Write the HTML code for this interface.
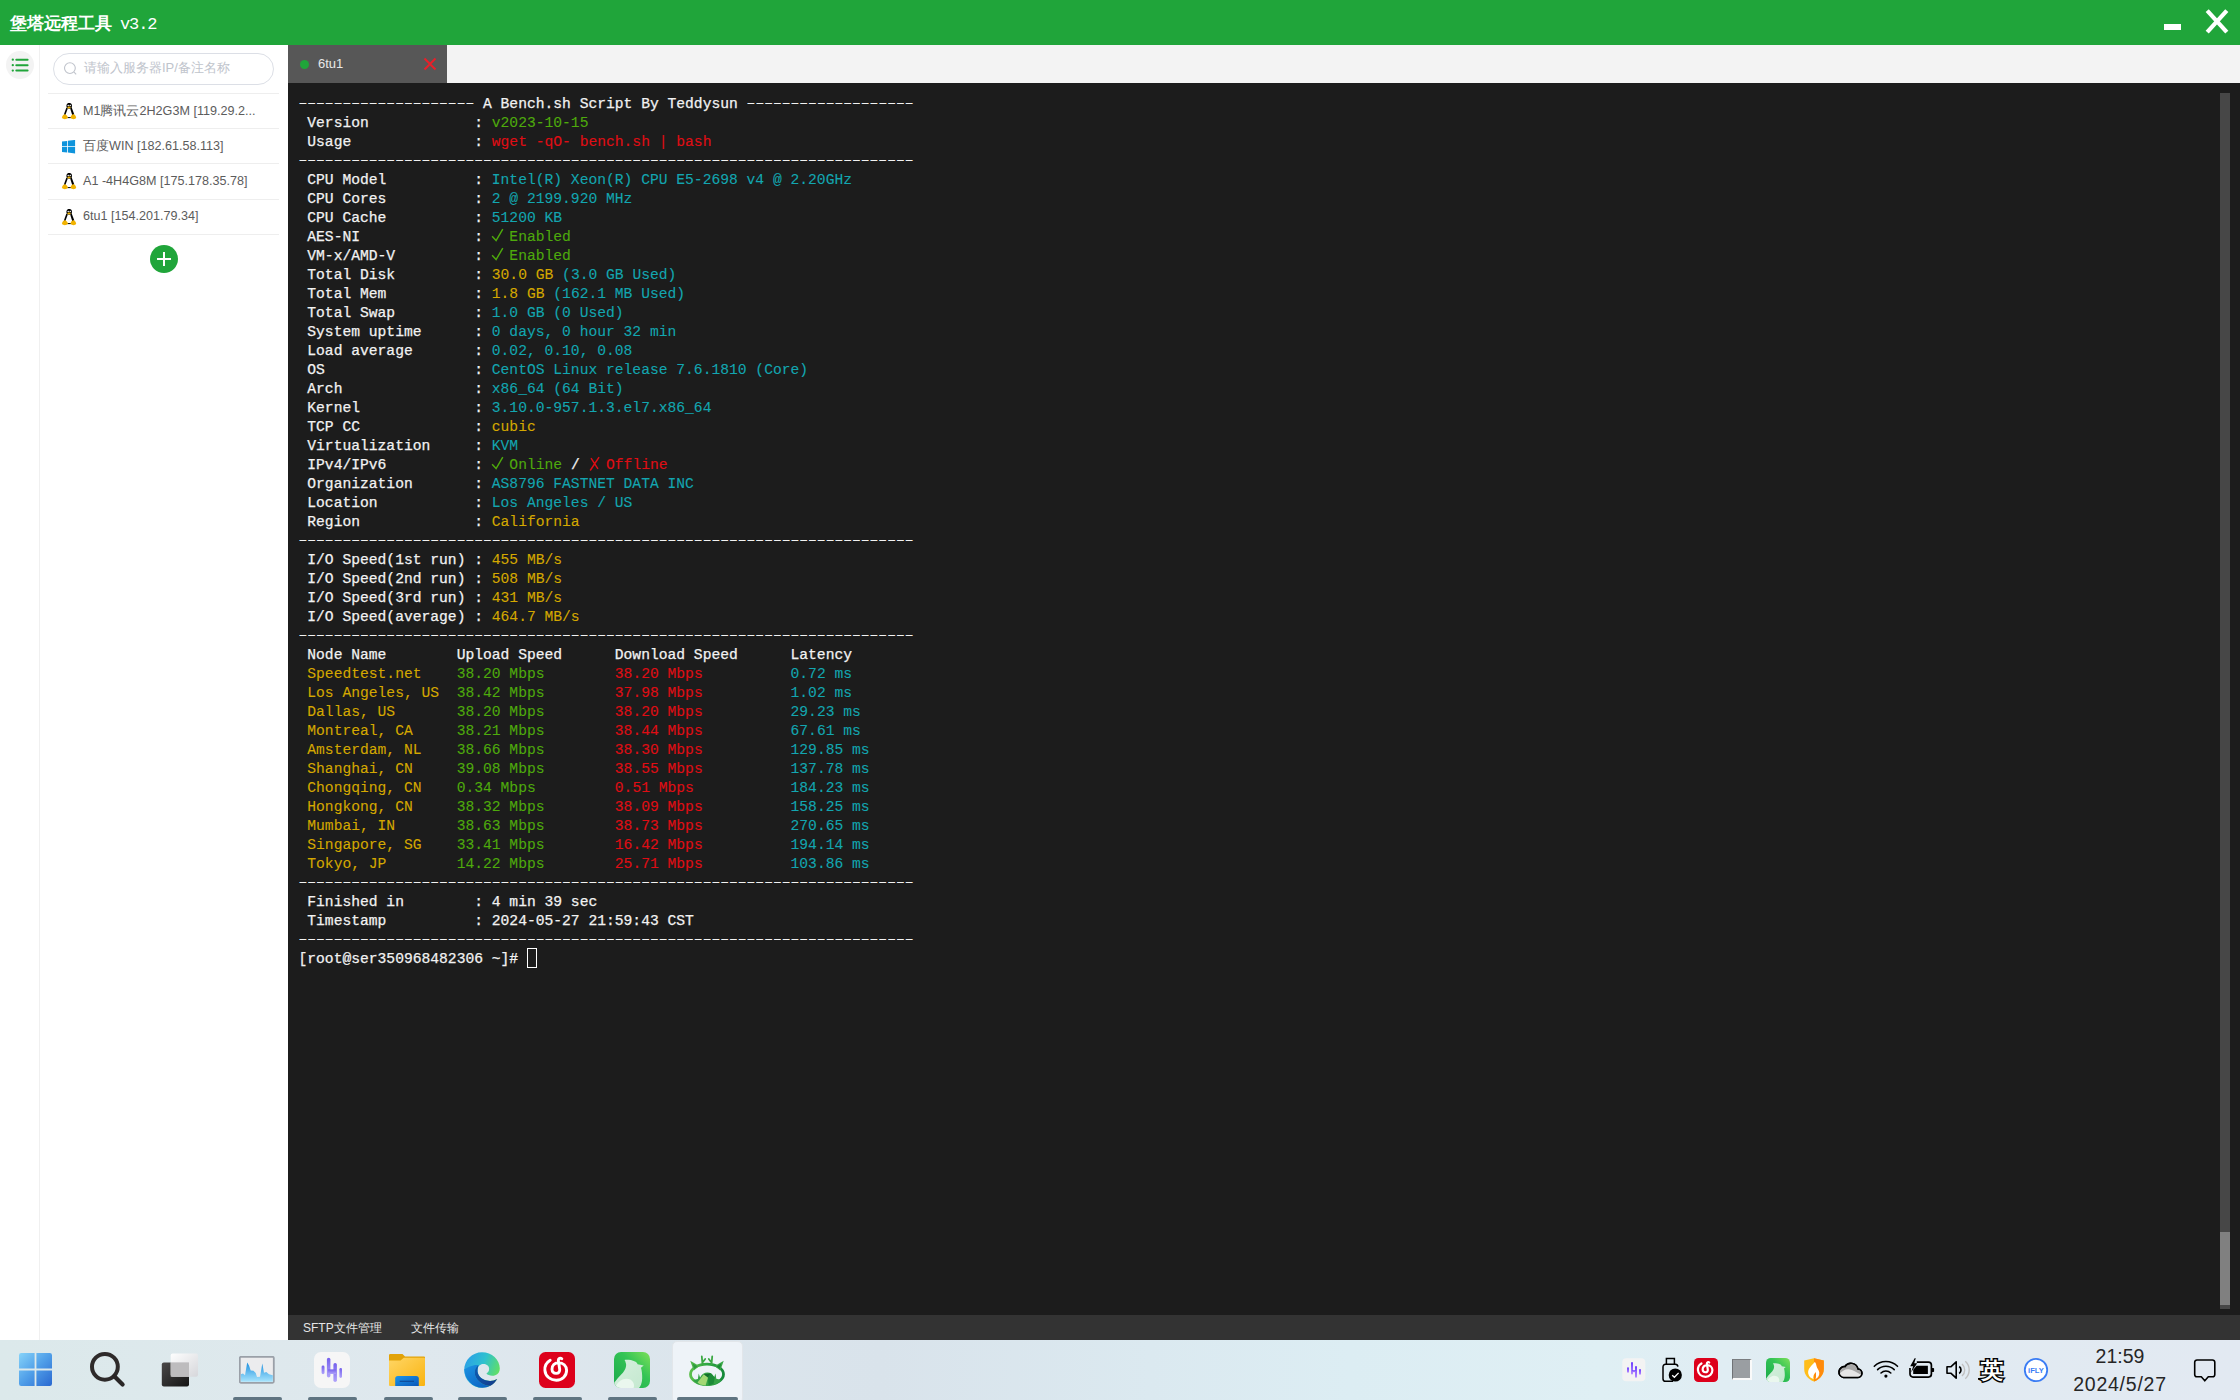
<!DOCTYPE html>
<html><head><meta charset="utf-8">
<style>
*{box-sizing:border-box}
html,body{margin:0;padding:0;width:2240px;height:1400px;overflow:hidden;background:#fff;font-family:"Liberation Sans",sans-serif}
.abs{position:absolute}
#title{left:0;top:0;width:2240px;height:45px;background:#20a53a}
#title .t{left:10px;top:13px;color:#fff;font-family:"Liberation Serif",serif;font-weight:bold;font-size:17px;line-height:22px;white-space:nowrap}
#side0{left:0;top:45px;width:40px;height:1295px;background:#fff;border-right:1px solid #f0f0f0}
#side{left:40px;top:45px;width:248px;height:1295px;background:#fff}
#tabbar{left:288px;top:45px;width:1952px;height:38px;background:#f3f3f3}
#tab{left:288px;top:45px;width:159px;height:38px;background:#575757}
#term{left:288px;top:83px;width:1952px;height:1232px;background:#1c1c1c}
#status{left:288px;top:1315px;width:1952px;height:25px;background:#333333}
#taskbar{left:0;top:1340px;width:2240px;height:60px;background:linear-gradient(90deg,#dce9eb 0px,#dfe8ee 420px,#d9e3eb 880px,#dbe9f0 1150px,#dcedf3 1350px,#dfeff4 1600px,#e1ebf2 1850px,#e2e9f2 2240px)}
pre{margin:0}
#txt{left:298.5px;top:95px;font-family:"Liberation Mono",monospace;font-size:14.65px;line-height:19px;color:#f2f2f2;white-space:pre;-webkit-text-stroke:0.25px currentColor}
.g{color:#4eaa0c}.r{color:#e00d14}.y{color:#d4a800}.c{color:#13a6b0}
.ck{vertical-align:top;overflow:visible}
.dl{position:relative;top:-1px}
.g,.r,.y,.c{-webkit-text-stroke:0.1px currentColor}
.ind{top:1397px;width:49px;height:4px;border-radius:2px;background:#5f7481}
.sitem{left:48px;width:231px;height:1px;background:#eeeeee}
.stext{left:83px;font-size:12.6px;color:#5c5c5c;white-space:nowrap;line-height:14px}
</style></head><body>
<div id="title" class="abs"><div class="t abs">堡塔远程工具</div><div class="abs" style="left:120px;top:14px;font-family:'Liberation Mono',monospace;font-size:17px;line-height:22px;letter-spacing:-1.1px;color:#fff">v3.2</div>
 <div class="abs" style="left:2164px;top:24px;width:17px;height:6px;background:#fff"></div>
 <svg class="abs" style="left:2203px;top:7px" width="28" height="30" viewBox="0 0 28 30"><path d="M4.2 3.6L23.8 25.2M23.8 3.6L4.2 25.2" stroke="#fff" stroke-width="4.2" fill="none"/></svg>
</div>
<div id="side0" class="abs"></div>
<div class="abs" style="left:6px;top:51px;width:28px;height:28px;border-radius:50%;background:#f3f3f3"></div>
<svg class="abs" style="left:0;top:45px" width="40" height="40" viewBox="0 0 40 40">
<g fill="#20a53a"><circle cx="12.8" cy="14.7" r="1.15"/><circle cx="12.8" cy="20.2" r="1.15"/><circle cx="12.8" cy="25.6" r="1.15"/></g>
<g stroke="#20a53a" stroke-width="2" stroke-linecap="round"><path d="M16.3 14.7H27.6M16.3 20.2H27.6M16.3 25.6H27.6"/></g></svg>
<div id="side" class="abs"></div>
<div class="abs" style="left:53px;top:53px;width:221px;height:32px;border:1px solid #dcdfe6;border-radius:16px;background:#fff"></div>
<svg class="abs" style="left:60px;top:58px" width="22" height="22" viewBox="0 0 22 22"><circle cx="9.9" cy="10.1" r="5.4" stroke="#c0c4cc" stroke-width="1.1" fill="none"/><path d="M14 14.2L16.2 16.4" stroke="#c0c4cc" stroke-width="1.1"/></svg>
<div class="abs" style="left:84px;top:60px;font-size:13px;line-height:16px;color:#c0c4cc;white-space:nowrap">请输入服务器IP/备注名称</div>
<div class="abs sitem" style="top:93px"></div>
<div class="abs sitem" style="top:128px"></div>
<div class="abs sitem" style="top:163px"></div>
<div class="abs sitem" style="top:199px"></div>
<div class="abs sitem" style="top:234px"></div>
<div class="abs stext" style="top:104px">M1腾讯云2H2G3M [119.29.2...</div>
<div class="abs stext" style="top:139px">百度WIN [182.61.58.113]</div>
<div class="abs stext" style="top:174px">A1 -4H4G8M [175.178.35.78]</div>
<div class="abs stext" style="top:209px">6tu1 [154.201.79.34]</div>
<svg class="abs" style="left:60px;top:103px" width="18" height="18" viewBox="0 0 18 18">
<path d="M6.4 4.6L3.8 11.8L5.3 12.3L7.8 5.6Z" fill="#000"/>
<path d="M11.6 4.2L14.3 11.6L12.3 12.4L10.2 5.6Z" fill="#000"/>
<ellipse cx="9.2" cy="2.8" rx="2.8" ry="2.9" fill="#000"/>
<circle cx="8.2" cy="2.4" r="0.75" fill="#fff"/><circle cx="10.2" cy="2.4" r="0.75" fill="#fff"/>
<ellipse cx="9" cy="4.5" rx="1.7" ry="0.9" fill="#f0b400"/>
<path d="M6.5 14.6H11.8" stroke="#000" stroke-width="1"/>
<path d="M1.9 14.3Q2.4 11.5 5 10.9Q7.7 12.3 8.1 14.8Q6.6 16.4 4 16.1Q2.1 15.7 1.9 14.3Z" fill="#f2b300"/>
<path d="M16.2 14.3Q15.7 11.5 13.1 10.9Q10.4 12.3 10.4 14.8Q11.9 16.4 14.4 16.1Q16.1 15.7 16.2 14.3Z" fill="#f2b300"/>
</svg>
<svg class="abs" style="left:62px;top:140px" width="14" height="14" viewBox="0 0 14 14"><path d="M0 1.6L5.1 0.9V6.3H0Z M5.9 0.8L13.1 -0.1V6.3H5.9Z M0 7.1H5.1V12.6L0 11.9Z M5.9 7.1H13.1V13.5L5.9 12.6Z" fill="#0f94dc"/></svg>
<svg class="abs" style="left:60px;top:173px" width="18" height="18" viewBox="0 0 18 18">
<path d="M6.4 4.6L3.8 11.8L5.3 12.3L7.8 5.6Z" fill="#000"/>
<path d="M11.6 4.2L14.3 11.6L12.3 12.4L10.2 5.6Z" fill="#000"/>
<ellipse cx="9.2" cy="2.8" rx="2.8" ry="2.9" fill="#000"/>
<circle cx="8.2" cy="2.4" r="0.75" fill="#fff"/><circle cx="10.2" cy="2.4" r="0.75" fill="#fff"/>
<ellipse cx="9" cy="4.5" rx="1.7" ry="0.9" fill="#f0b400"/>
<path d="M6.5 14.6H11.8" stroke="#000" stroke-width="1"/>
<path d="M1.9 14.3Q2.4 11.5 5 10.9Q7.7 12.3 8.1 14.8Q6.6 16.4 4 16.1Q2.1 15.7 1.9 14.3Z" fill="#f2b300"/>
<path d="M16.2 14.3Q15.7 11.5 13.1 10.9Q10.4 12.3 10.4 14.8Q11.9 16.4 14.4 16.1Q16.1 15.7 16.2 14.3Z" fill="#f2b300"/>
</svg>
<svg class="abs" style="left:60px;top:208.5px" width="18" height="18" viewBox="0 0 18 18">
<path d="M6.4 4.6L3.8 11.8L5.3 12.3L7.8 5.6Z" fill="#000"/>
<path d="M11.6 4.2L14.3 11.6L12.3 12.4L10.2 5.6Z" fill="#000"/>
<ellipse cx="9.2" cy="2.8" rx="2.8" ry="2.9" fill="#000"/>
<circle cx="8.2" cy="2.4" r="0.75" fill="#fff"/><circle cx="10.2" cy="2.4" r="0.75" fill="#fff"/>
<ellipse cx="9" cy="4.5" rx="1.7" ry="0.9" fill="#f0b400"/>
<path d="M6.5 14.6H11.8" stroke="#000" stroke-width="1"/>
<path d="M1.9 14.3Q2.4 11.5 5 10.9Q7.7 12.3 8.1 14.8Q6.6 16.4 4 16.1Q2.1 15.7 1.9 14.3Z" fill="#f2b300"/>
<path d="M16.2 14.3Q15.7 11.5 13.1 10.9Q10.4 12.3 10.4 14.8Q11.9 16.4 14.4 16.1Q16.1 15.7 16.2 14.3Z" fill="#f2b300"/>
</svg>
<div class="abs" style="left:150px;top:245px;width:28px;height:28px;border-radius:50%;background:#20a53a"></div>
<div class="abs" style="left:157px;top:258px;width:14px;height:2px;background:#fff"></div>
<div class="abs" style="left:163px;top:252px;width:2px;height:14px;background:#fff"></div>
<div id="tabbar" class="abs"></div>
<div id="tab" class="abs"></div>
<div class="abs" style="left:300px;top:60px;width:9px;height:9px;border-radius:50%;background:#20a53a"></div>
<div class="abs" style="left:318px;top:56px;font-size:13px;line-height:15px;color:#e8e8e8">6tu1</div>
<svg class="abs" style="left:422px;top:56px" width="16" height="16" viewBox="0 0 16 16"><path d="M2.5 2.5L13.5 13.5M13.5 2.5L2.5 13.5" stroke="#e8202a" stroke-width="2"/></svg>
<div id="term" class="abs"></div>
<div id="status" class="abs"></div>
<div class="abs" style="left:303px;top:1321px;font-size:12px;line-height:15px;color:#e6e6e6;white-space:nowrap">SFTP文件管理</div>
<div class="abs" style="left:411px;top:1321px;font-size:12px;line-height:15px;color:#e6e6e6;white-space:nowrap">文件传输</div>
<div class="abs" style="left:2220px;top:93px;width:10px;height:1216px;background:#474747"></div>
<div class="abs" style="left:2220px;top:1232px;width:10px;height:73px;background:#808080"></div>
<div id="taskbar" class="abs"></div>

<!-- start -->
<svg class="abs" style="left:19px;top:1353px" width="33" height="33" viewBox="0 0 33 33">
<defs><linearGradient id="wg" x1="0" y1="0" x2="1" y2="1"><stop offset="0" stop-color="#86d3f9"/><stop offset="0.5" stop-color="#4f9ee8"/><stop offset="1" stop-color="#2a68d0"/></linearGradient></defs>
<path d="M2.2 0H15.6V15.6H0V2.2A2.2 2.2 0 0 1 2.2 0Z M17.4 0H30.8A2.2 2.2 0 0 1 33 2.2V15.6H17.4Z M0 17.4H15.6V33H2.2A2.2 2.2 0 0 1 0 30.8Z M17.4 17.4H33V30.8A2.2 2.2 0 0 1 30.8 33H17.4Z" fill="url(#wg)"/></svg>
<!-- search -->
<svg class="abs" style="left:88px;top:1350px" width="40" height="40" viewBox="0 0 40 40">
<circle cx="16.9" cy="16.8" r="12.9" stroke="#2e2a2a" stroke-width="4" fill="none"/>
<path d="M26.3 26.3L34.6 34.6" stroke="#2a2626" stroke-width="4.2" stroke-linecap="round"/></svg>
<!-- taskview -->
<svg class="abs" style="left:160px;top:1351px" width="40" height="38" viewBox="0 0 40 38">
<defs><linearGradient id="tv1" x1="0" y1="0" x2="1" y2="1"><stop offset="0" stop-color="#4a4848"/><stop offset="1" stop-color="#141414"/></linearGradient>
<linearGradient id="tv2" x1="0" y1="0" x2="1" y2="1"><stop offset="0" stop-color="#ffffff"/><stop offset="1" stop-color="#d6d6da"/></linearGradient></defs>
<rect x="1.8" y="11.4" width="27.2" height="24.1" rx="2" fill="url(#tv1)"/>
<rect x="10.7" y="2.5" width="27.3" height="23.2" rx="2" fill="url(#tv2)" opacity="0.95"/>
<rect x="10.7" y="11.4" width="18.3" height="14.3" fill="#bdbcbe"/></svg>
<!-- taskmgr -->
<svg class="abs" style="left:239px;top:1356px" width="36" height="28" viewBox="0 0 36 28">
<defs><linearGradient id="tmg" x1="0" y1="0" x2="0" y2="1"><stop offset="0" stop-color="#1e90e0"/><stop offset="1" stop-color="#a8e4fc"/></linearGradient></defs>
<rect x="0.8" y="0.8" width="34" height="26" rx="1.2" fill="#ececee" stroke="#9aa0a8" stroke-width="1.8"/>
<path d="M1.8 18.2L4 17.5L6 19.2L8.2 6.5L10 9.5L11.7 14.5L14.5 14.8L16.7 17L18 21L21 20.8L23.3 7.5L25 16.8L27.3 16.1L30 18.2L33.8 19.2V25.8H1.8Z" fill="url(#tmg)"/></svg>
<!-- audio app -->
<svg class="abs" style="left:314px;top:1352px" width="36" height="36" viewBox="0 0 36 36">
<defs><linearGradient id="aug" x1="0" y1="0" x2="0" y2="1"><stop offset="0" stop-color="#7560ec"/><stop offset="1" stop-color="#b0a4fa"/></linearGradient></defs>
<rect x="0" y="0" width="36" height="36" rx="7" fill="#f6f6f6"/>
<g fill="url(#aug)"><rect x="7.6" y="13.6" width="2.9" height="8.6" rx="1.45"/><rect x="12.9" y="5.8" width="3.5" height="19.8" rx="1.75"/><rect x="19.4" y="11" width="3.5" height="19" rx="1.75"/><rect x="25.4" y="16" width="2.6" height="9.9" rx="1.3"/><rect x="14" y="17.4" width="8" height="4.6"/></g></svg>
<!-- folder -->
<svg class="abs" style="left:389px;top:1353px" width="37" height="34" viewBox="0 0 37 34">
<defs><linearGradient id="fg" x1="0" y1="0" x2="1" y2="1"><stop offset="0" stop-color="#ffd665"/><stop offset="1" stop-color="#f9b310"/></linearGradient>
<linearGradient id="fbg" x1="0" y1="0" x2="1" y2="1"><stop offset="0" stop-color="#1b96ea"/><stop offset="1" stop-color="#0a56b8"/></linearGradient></defs>
<path d="M1.2 1H13.5L16 3.4H35A1.1 1.1 0 0 1 36 4.5V10H0V2.2A1.2 1.2 0 0 1 1.2 1Z" fill="#e2a208"/>
<path d="M0 7.6H11.5L14.8 4.7H35A1.1 1.1 0 0 1 36 5.8V32A1.1 1.1 0 0 1 35 33H1A1 1 0 0 1 0 32Z" fill="url(#fg)"/>
<path d="M6.2 33V25.5A2.6 2.6 0 0 1 8.8 22.9H27.2A2.6 2.6 0 0 1 29.8 25.5V33Z" fill="url(#fbg)"/>
<rect x="10.7" y="27.7" width="14.3" height="1.2" fill="#0e4a98"/></svg>
<!-- edge -->
<svg class="abs" style="left:464px;top:1352px" width="36" height="36" viewBox="0 0 36 36">
<defs><linearGradient id="eg1" x1="0" y1="0.2" x2="1" y2="0.6"><stop offset="0" stop-color="#2a9ee8"/><stop offset="0.5" stop-color="#2fc1cf"/><stop offset="1" stop-color="#66e25a"/></linearGradient>
<linearGradient id="eg2" x1="0" y1="0" x2="0.8" y2="1"><stop offset="0" stop-color="#1c93e2"/><stop offset="1" stop-color="#0b63c4"/></linearGradient>
<linearGradient id="eg3" x1="0" y1="0" x2="1" y2="0.5"><stop offset="0" stop-color="#0d5cb4"/><stop offset="1" stop-color="#123f8e"/></linearGradient></defs>
<path d="M18 0.2C8.2 0.2 0.2 8.2 0.2 18C0.2 27.8 8.2 35.8 18 35.8C24.5 35.8 30.2 32.3 33.2 27.1C30 28.8 26.4 29.4 23 28.6C16.8 27.2 13 22.6 13.6 17.4C14.2 12.9 18.2 11.3 21.5 12.3C24.2 13.2 25.8 15.4 24.9 18.6C24.5 20 23.3 21.1 22.4 21.6C24 23.6 28 24.4 31.2 23.3C34.3 22.3 35.8 19.8 35.8 16.5C35.8 7.4 27.9 0.2 18 0.2Z" fill="url(#eg1)"/>
<path d="M0.3 17.2C0.8 27.3 8.6 35.8 18.5 35.8C21.5 35.8 24.2 35.1 26.5 33.8C20.5 33.6 14.6 30.6 11.9 25.2C9.7 20.8 10.8 15.6 14.6 13C11.7 12.6 8.6 13.2 5.9 14.6C3.6 15.7 1.6 16.9 0.3 17.2Z" fill="url(#eg2)"/>
<path d="M14.6 13C10.8 15.6 9.7 20.8 11.9 25.2C14.6 30.6 20.5 33.6 26.5 33.8C29.2 32.4 31.5 30 33.2 27.1C30 28.8 26.4 29.4 23 28.6C16.8 27.2 13 22.6 13.6 17.4C13.8 15.7 14.1 14.2 14.6 13Z" fill="url(#eg3)"/>
</svg>
<!-- netease -->
<svg class="abs" style="left:539px;top:1352px" width="36" height="36" viewBox="0 0 36 36">
<rect width="36" height="36" rx="6.5" fill="#dd001b"/>
<path d="M11.2 8.2C7.4 10.4 5.6 14.2 5.9 18.3C6.4 24.3 11.4 28.2 17.3 28.2C23.5 28.2 27.7 23.4 27.6 18.2C27.5 13.9 24 10.6 19.8 10.6C15.6 10.6 12.9 13.7 13 17.2C13.1 19.6 14.8 21.3 17.2 21.4C19.6 21.4 21 19.6 20.7 17.3L19.3 8.3C19.4 6.6 21.3 5.4 22.8 6.8" stroke="#fff" stroke-width="2.9" fill="none" stroke-linecap="round"/></svg>
<!-- bird -->
<svg class="abs" style="left:614px;top:1352px" width="36" height="36" viewBox="0 0 36 36">
<defs><linearGradient id="bg1" x1="0" y1="1" x2="1" y2="0"><stop offset="0" stop-color="#1aa84a"/><stop offset="0.6" stop-color="#34c455"/><stop offset="1" stop-color="#7ee05a"/></linearGradient>
<linearGradient id="bg2" x1="0" y1="0" x2="1" y2="1"><stop offset="0" stop-color="#d6f0de"/><stop offset="1" stop-color="#c4e8cf"/></linearGradient></defs>
<clipPath id="bclip"><rect width="36" height="36" rx="7"/></clipPath>
<g clip-path="url(#bclip)"><rect width="36" height="36" fill="url(#bg1)"/>
<path d="M10.5 7.9C14 7.7 18 8 21 9.5C22.5 10.3 23.3 11.2 23.6 12.2L29.7 13.6L27 15.7C27.8 18.5 28.3 22 28.2 26.5C28 31 26.5 34.5 25 36H0V31C2.3 28 4.7 25 7.4 22.3C11.2 18.8 12.6 14.3 12 11.8C11.8 10.5 11.2 8.9 10.5 7.9Z" fill="url(#bg2)"/>
<path d="M1 36C2.5 32 5 29 9 27.3C13 25.8 18 26.8 19.5 31C20.4 33.5 20 35.5 19.5 36Z" fill="#eaf7ee"/></g></svg>
<!-- baota active -->
<div class="abs" style="left:672px;top:1341px;width:71px;height:62px;border-radius:5px;background:#eef3f8;border:1px solid #e2e6ea"></div>
<svg class="abs" style="left:687px;top:1353px" width="40" height="36" viewBox="0 0 40 36">
<defs><linearGradient id="btg" x1="0" y1="0" x2="1" y2="0"><stop offset="0" stop-color="#5cbf4c"/><stop offset="0.5" stop-color="#2fa843"/><stop offset="1" stop-color="#15893a"/></linearGradient></defs>
<ellipse cx="20" cy="21.3" rx="16.5" ry="10.2" stroke="url(#btg)" stroke-width="2.8" fill="none"/>
<path d="M6 27.2C7.8 26.6 9.5 26.3 10.9 26L11.7 20.6L13.1 24.6C14.8 21.2 17.4 19.6 20.4 19.6C23.4 19.6 25.6 20.9 27.1 24.2L28.5 20.4L29.3 25.8C30.7 26.1 32.2 26.6 34 27.2C31.5 30.6 26.3 32.6 20 32.6C13.7 32.6 8.5 30.6 6 27.2Z" fill="#34a345"/>
<path d="M10.5 29.5L16.8 21.2L21 24.6L18.6 32.4L13 31.5Z" fill="#a2d874"/>
<path d="M21 24.6L23.8 20.2L27.8 24.5L26.5 31L21.6 32.4Z" fill="#1b8a37"/>
<path d="M16.8 21.2L23.8 20.2L21 24.6Z" fill="#146f2c"/>
<path d="M6.8 17.5L3.2 7.7L12.3 13.1Z" fill="#4db548"/><path d="M7.2 16L5.8 10.5L10.5 13.5Z" fill="#2d9a3f"/>
<path d="M33.2 17.5L36.8 7.7L27.7 13.1Z" fill="#3aa847"/><path d="M32.8 16L34.2 10.5L29.5 13.5Z" fill="#1b8a37"/>
<path d="M15.5 11.5L14.8 3.5M15.7 9.2L18.2 6M24.5 11.5L25.2 3.5M24.3 9.2L21.8 6" stroke="#3aa843" stroke-width="1.8" stroke-linecap="round"/></svg>
<!-- indicators -->
<div class="abs ind" style="left:233px"></div><div class="abs ind" style="left:308px"></div><div class="abs ind" style="left:384px"></div><div class="abs ind" style="left:458px"></div><div class="abs ind" style="left:533px"></div><div class="abs ind" style="left:608px"></div><div class="abs ind" style="left:677px;width:61px"></div>
<!-- tray -->
<svg class="abs" style="left:1622px;top:1358px" width="24" height="24" viewBox="0 0 24 24">
<defs><linearGradient id="aug2" x1="0" y1="0" x2="0" y2="1"><stop offset="0" stop-color="#6a3cff"/><stop offset="1" stop-color="#b68cff"/></linearGradient></defs>
<rect x="0.3" y="0.3" width="23" height="23" rx="4" fill="#f3f3f3"/>
<g fill="url(#aug2)"><rect x="5" y="9.3" width="2" height="5.5" rx="1"/><rect x="9" y="4" width="2" height="12.5" rx="1"/><rect x="13" y="8" width="2" height="11.8" rx="1"/><rect x="17" y="11" width="2" height="5.8" rx="1"/><rect x="10" y="12.2" width="4" height="2"/></g></svg>
<svg class="abs" style="left:1661px;top:1357px" width="24" height="26" viewBox="0 0 24 26">
<path d="M5.4 7.3V1.6H13.4V7.3" stroke="#000" stroke-width="1.5" fill="none"/>
<path d="M12 24.3H4.6A2.6 2.6 0 0 1 2 21.7V10A2.6 2.6 0 0 1 4.6 7.3H14.3A2.6 2.6 0 0 1 16.9 9.6" stroke="#000" stroke-width="1.5" fill="none"/>
<circle cx="14.3" cy="18" r="6.6" fill="#000"/>
<path d="M11.2 18.2L13.4 20.3L17.6 15.9" stroke="#fff" stroke-width="1.3" fill="none"/></svg>
<svg class="abs" style="left:1694px;top:1358px" width="24" height="24" viewBox="0 0 36 36">
<rect width="36" height="36" rx="6.5" fill="#dd001b"/>
<path d="M11.2 8.2C7.4 10.4 5.6 14.2 5.9 18.3C6.4 24.3 11.4 28.2 17.3 28.2C23.5 28.2 27.7 23.4 27.6 18.2C27.5 13.9 24 10.6 19.8 10.6C15.6 10.6 12.9 13.7 13 17.2C13.1 19.6 14.8 21.3 17.2 21.4C19.6 21.4 21 19.6 20.7 17.3L19.3 8.3C19.4 6.6 21.3 5.4 22.8 6.8" stroke="#fff" stroke-width="3.3" fill="none" stroke-linecap="round"/></svg>
<div class="abs" style="left:1732px;top:1359px;width:20px;height:21px;background:#9a9ea2;border-left:1px solid #6f7276;border-top:1px solid #7a7d80;border-right:2px solid #fafafa;border-bottom:2px solid #fafafa"></div>
<svg class="abs" style="left:1766px;top:1358px" width="24" height="24" viewBox="0 0 36 36">
<clipPath id="bclip2"><rect width="36" height="36" rx="7"/></clipPath>
<g clip-path="url(#bclip2)"><rect width="36" height="36" fill="url(#bg1)"/>
<path d="M10.5 7.9C14 7.7 18 8 21 9.5C22.5 10.3 23.3 11.2 23.6 12.2L29.7 13.6L27 15.7C27.8 18.5 28.3 22 28.2 26.5C28 31 26.5 34.5 25 36H0V31C2.3 28 4.7 25 7.4 22.3C11.2 18.8 12.6 14.3 12 11.8C11.8 10.5 11.2 8.9 10.5 7.9Z" fill="url(#bg2)"/>
<path d="M1 36C2.5 32 5 29 9 27.3C13 25.8 18 26.8 19.5 31C20.4 33.5 20 35.5 19.5 36Z" fill="#eaf7ee"/></g></svg>
<svg class="abs" style="left:1803px;top:1358px" width="22" height="24" viewBox="0 0 22 24">
<path d="M11 0.3L20.8 2.5V11C20.8 17 16.5 21.5 11 23.5C5.5 21.5 1.2 17 1.2 11V2.5Z" fill="#ffbd1a"/>
<path d="M11 0.3L20.8 2.5V11C20.8 17 16.5 21.5 11 23.5Z" fill="#ff8a0c"/>
<path d="M11.8 4C9 7.5 4.5 10.5 5.2 15.5C5.7 18.5 8 20.5 10.5 21C9.5 18.5 11 16 13 14C12.8 16.5 13.5 18.5 12.5 21C15 20 16.5 17.5 16.3 14.5C16 11.8 14 10.5 13.5 8C13.3 6.5 12.8 5 11.8 4Z" fill="#fff"/></svg>
<svg class="abs" style="left:1837px;top:1361px" width="26" height="18" viewBox="0 0 26 18">
<path d="M6.5 16.5H20.3A4.3 4.3 0 0 0 21 7.9A7.2 7.2 0 0 0 7.9 5.6A5.5 5.5 0 0 0 6.5 16.5Z" fill="#a8a8a8" stroke="#000" stroke-width="1.5"/>
<path d="M2.2 13.5C5 9.5 9 7.5 13 8.5C16.5 9.3 19.5 11.5 24 13.8L22 16H5Z" fill="#e6e6e6"/>
<path d="M6.5 16.5H20.3A4.3 4.3 0 0 0 21 7.9A7.2 7.2 0 0 0 7.9 5.6A5.5 5.5 0 0 0 6.5 16.5Z" fill="none" stroke="#000" stroke-width="1.5"/></svg>
<svg class="abs" style="left:1873px;top:1360px" width="26" height="19" viewBox="0 0 26 19">
<path d="M1.3 6.3A16.5 16.5 0 0 1 24.5 6.3M4.6 9.6A11.8 11.8 0 0 1 21.2 9.6M8 13A7 7 0 0 1 17.8 13" stroke="#000" stroke-width="1.6" fill="none" stroke-linecap="round"/>
<circle cx="12.9" cy="16.1" r="1.6" fill="#000"/></svg>
<svg class="abs" style="left:1909px;top:1357px" width="26" height="22" viewBox="0 0 26 22">
<path d="M7.8 5.1H19.4A3 3 0 0 1 22.4 8.1V17.1A3 3 0 0 1 19.4 20.1H4A3 3 0 0 1 1 17.1V11" stroke="#000" stroke-width="1.7" fill="none"/>
<rect x="22.4" y="10.9" width="2.7" height="4.2" rx="0.8" fill="#000"/>
<path d="M7.6 8.7H18.9V16.9H4.2V12.8Z" fill="#000"/>
<path d="M5.6 1.2L1.2 9.3H4.2L2 15.5L8.2 6.3H5.2L6.8 1.2Z" fill="#000"/></svg>
<svg class="abs" style="left:1945px;top:1360px" width="26" height="20" viewBox="0 0 26 20">
<path d="M2 6.8H5.8L11.2 1.8V18.2L5.8 13.2H2Z" stroke="#000" stroke-width="1.6" fill="none" stroke-linejoin="round"/>
<path d="M14.2 6.5A4.3 4.3 0 0 1 14.2 13.5" stroke="#000" stroke-width="1.6" fill="none"/>
<path d="M17 4A8 8 0 0 1 17 16M20.3 1.3A11.7 11.7 0 0 1 20.3 18.7" stroke="#c0c0c0" stroke-width="1.4" fill="none"/></svg>
<svg class="abs" style="left:1978px;top:1354px" width="28" height="30" viewBox="0 0 28 30"><text x="14" y="23.5" text-anchor="middle" font-family="Liberation Sans" font-weight="bold" font-size="22" fill="#fff" stroke="#000" stroke-width="2.8" paint-order="stroke" stroke-linejoin="miter">英</text></svg>
<svg class="abs" style="left:2023px;top:1357px" width="26" height="26" viewBox="0 0 26 26">
<circle cx="13" cy="13" r="11.2" fill="#fff" stroke="#3a7cf4" stroke-width="1.8"/>
<text x="13" y="15.6" text-anchor="middle" font-family="Liberation Sans" font-weight="bold" font-size="7.6" fill="#3a7cf4">iFLY</text></svg>
<div class="abs" style="left:2090px;top:1344.5px;width:60px;font-size:19.5px;line-height:22px;color:#262626;text-align:center;white-space:nowrap">21:59</div>
<div class="abs" style="left:2060px;top:1372.5px;width:120px;font-size:19.5px;line-height:22px;color:#262626;text-align:center;white-space:nowrap;letter-spacing:0.75px">2024/5/27</div>
<svg class="abs" style="left:2193px;top:1358px" width="24" height="26" viewBox="0 0 24 26">
<path d="M4 2H19.5A2.3 2.3 0 0 1 21.8 4.3V16.5A2.3 2.3 0 0 1 19.5 18.8H15.3L11.8 22.8L8.3 18.8H4A2.3 2.3 0 0 1 1.7 16.5V4.3A2.3 2.3 0 0 1 4 2Z" stroke="#000" stroke-width="1.6" fill="none" stroke-linejoin="round"/></svg>
<pre id="txt" class="abs"><span class="dl">––––––––––––––––––––</span> A Bench.sh Script By Teddysun <span class="dl">–––––––––––––––––––</span>
 Version            : <span class="g">v2023-10-15</span>
 Usage              : <span class="r">wget -qO- bench.sh | bash</span>
<span class="dl">––––––––––––––––––––––––––––––––––––––––––––––––––––––––––––––––––––––</span>
 CPU Model          : <span class="c">Intel(R) Xeon(R) CPU E5-2698 v4 @ 2.20GHz</span>
 CPU Cores          : <span class="c">2 @ 2199.920 MHz</span>
 CPU Cache          : <span class="c">51200 KB</span>
 AES-NI             : <span class="g"><svg class="ck" width="8.79" height="19" viewBox="0 0 8.79 19"><path d="M0.1 8.3L4.1 12.6L10.8 1.1" stroke="currentColor" stroke-width="1.45" fill="none"/></svg> Enabled</span>
 VM-x/AMD-V         : <span class="g"><svg class="ck" width="8.79" height="19" viewBox="0 0 8.79 19"><path d="M0.1 8.3L4.1 12.6L10.8 1.1" stroke="currentColor" stroke-width="1.45" fill="none"/></svg> Enabled</span>
 Total Disk         : <span class="y">30.0 GB</span> <span class="c">(3.0 GB Used)</span>
 Total Mem          : <span class="y">1.8 GB</span> <span class="c">(162.1 MB Used)</span>
 Total Swap         : <span class="c">1.0 GB (0 Used)</span>
 System uptime      : <span class="c">0 days, 0 hour 32 min</span>
 Load average       : <span class="c">0.02, 0.10, 0.08</span>
 OS                 : <span class="c">CentOS Linux release 7.6.1810 (Core)</span>
 Arch               : <span class="c">x86_64 (64 Bit)</span>
 Kernel             : <span class="c">3.10.0-957.1.3.el7.x86_64</span>
 TCP CC             : <span class="y">cubic</span>
 Virtualization     : <span class="c">KVM</span>
 IPv4/IPv6          : <span class="g"><svg class="ck" width="8.79" height="19" viewBox="0 0 8.79 19"><path d="M0.1 8.3L4.1 12.6L10.8 1.1" stroke="currentColor" stroke-width="1.45" fill="none"/></svg> Online</span> / <span class="r"><svg class="ck" width="8.79" height="19" viewBox="0 0 8.79 19"><path d="M11.1 1.1L2.2 14.5M3 2.2L10 12.9" stroke="currentColor" stroke-width="1.45" fill="none"/></svg> Offline</span>
 Organization       : <span class="c">AS8796 FASTNET DATA INC</span>
 Location           : <span class="c">Los Angeles / US</span>
 Region             : <span class="y">California</span>
<span class="dl">––––––––––––––––––––––––––––––––––––––––––––––––––––––––––––––––––––––</span>
 I/O Speed(1st run) : <span class="y">455 MB/s</span>
 I/O Speed(2nd run) : <span class="y">508 MB/s</span>
 I/O Speed(3rd run) : <span class="y">431 MB/s</span>
 I/O Speed(average) : <span class="y">464.7 MB/s</span>
<span class="dl">––––––––––––––––––––––––––––––––––––––––––––––––––––––––––––––––––––––</span>
 Node Name        Upload Speed      Download Speed      Latency
<span class="y"> Speedtest.net    </span><span class="g">38.20 Mbps        </span><span class="r">38.20 Mbps          </span><span class="c">0.72 ms</span>
<span class="y"> Los Angeles, US  </span><span class="g">38.42 Mbps        </span><span class="r">37.98 Mbps          </span><span class="c">1.02 ms</span>
<span class="y"> Dallas, US       </span><span class="g">38.20 Mbps        </span><span class="r">38.20 Mbps          </span><span class="c">29.23 ms</span>
<span class="y"> Montreal, CA     </span><span class="g">38.21 Mbps        </span><span class="r">38.44 Mbps          </span><span class="c">67.61 ms</span>
<span class="y"> Amsterdam, NL    </span><span class="g">38.66 Mbps        </span><span class="r">38.30 Mbps          </span><span class="c">129.85 ms</span>
<span class="y"> Shanghai, CN     </span><span class="g">39.08 Mbps        </span><span class="r">38.55 Mbps          </span><span class="c">137.78 ms</span>
<span class="y"> Chongqing, CN    </span><span class="g">0.34 Mbps         </span><span class="r">0.51 Mbps           </span><span class="c">184.23 ms</span>
<span class="y"> Hongkong, CN     </span><span class="g">38.32 Mbps        </span><span class="r">38.09 Mbps          </span><span class="c">158.25 ms</span>
<span class="y"> Mumbai, IN       </span><span class="g">38.63 Mbps        </span><span class="r">38.73 Mbps          </span><span class="c">270.65 ms</span>
<span class="y"> Singapore, SG    </span><span class="g">33.41 Mbps        </span><span class="r">16.42 Mbps          </span><span class="c">194.14 ms</span>
<span class="y"> Tokyo, JP        </span><span class="g">14.22 Mbps        </span><span class="r">25.71 Mbps          </span><span class="c">103.86 ms</span>
<span class="dl">––––––––––––––––––––––––––––––––––––––––––––––––––––––––––––––––––––––</span>
 Finished in        : 4 min 39 sec
 Timestamp          : 2024-05-27 21:59:43 CST
<span class="dl">––––––––––––––––––––––––––––––––––––––––––––––––––––––––––––––––––––––</span>
[root@ser350968482306 ~]# </pre>
<div class="abs" style="left:527px;top:948px;width:9.5px;height:19.5px;border:1.4px solid #fff"></div>
</body></html>
